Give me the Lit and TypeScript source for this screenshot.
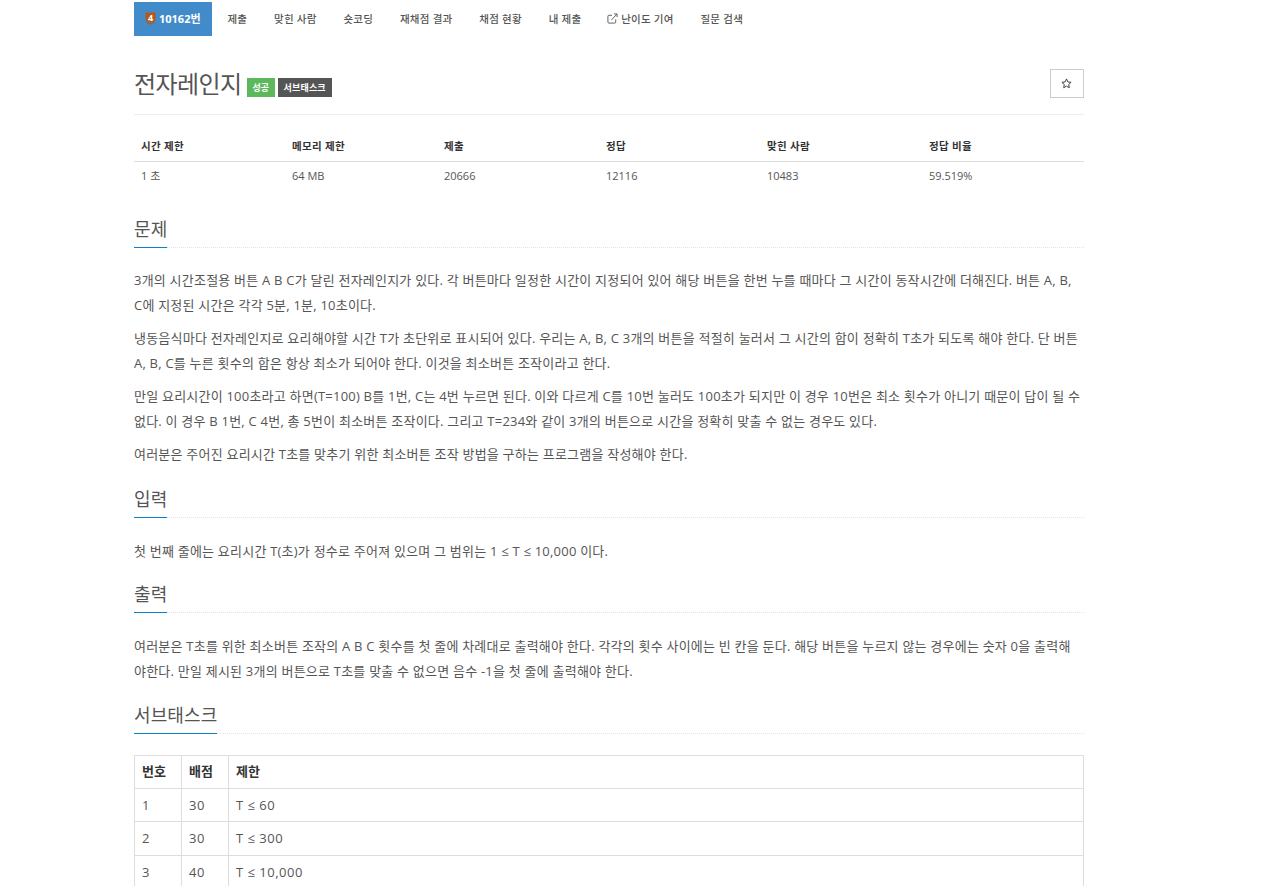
import { LitElement, html, css, svg } from "lit";
import { customElement } from "lit/decorators.js";

const externalIcon = svg`<svg class="ext" viewBox="0 0 12 12" width="11" height="11" fill="none" stroke="#555" stroke-width="1"><path d="M9.500 7v3a1 1 0 0 1-1 1H2a1 1 0 0 1-1-1V3.500a1 1 0 0 1 1-1h3.500"/><path d="M5 7.500 10.500 1.500M7.500 1h3.500v3.500"/></svg>`;

@customElement("app-root")
export class AppRoot extends LitElement {
  static styles = css`
    :host {
      display: block;
      height: 886px;
      overflow: hidden;
      background: #fff;
      color: #555;
      font-family: "Open Sans", "Noto Sans CJK KR", sans-serif;
      font-size: 13px;
    }
    .page { width: 950px; margin-left: 134px; }
    nav { display: flex; height: 34px; padding-top: 2px; font-size: 10.5px; font-weight: 500; }
    nav a { display: flex; align-items: center; gap: 3px; padding: 0 13.4px 2px; color: #555; white-space: nowrap; letter-spacing: 0.25px; }
    nav a.active { background: #428bca; color: #fff; padding: 0 12px 2px 11px; margin-right: 2px; width: 55px; font-weight: 700; font-size: 11px; gap: 3px; letter-spacing: 0; }
    .tier { display: block; flex: none; }
    .ext { flex: none; margin-left: -1px; }
    header { display: flex; align-items: flex-start; justify-content: space-between; margin-top: 32px; height: 46px; border-bottom: 1px solid #eee; }
    .title { display: flex; align-items: center; gap: 3px; height: 32px; }
    h1 { margin: 0 2px 0 0; font-size: 24px; font-weight: 400; line-height: 32px; letter-spacing: -0.55px; color: #555; }
    .label { display: flex; align-items: center; justify-content: center; height: 19px; margin-top: 7px; color: #fff; font-size: 9px; font-weight: 700; }
    .ok { width: 28px; background: #5cb85c; }
    .sub { width: 54px; background: #555; letter-spacing: 0.2px; }
    .star { display: flex; align-items: center; justify-content: center; width: 31px; height: 27px; padding-right: 1px; border: 1px solid #ccc; margin-top: 1px; }
    table { border-collapse: collapse; table-layout: fixed; width: 100%; }
    .info { margin-top: 15px; font-size: 11px; }
    .info th { height: 31px; padding: 0 7px; text-align: left; font-weight: 700; font-size: 10.5px; letter-spacing: 0.35px; color: #333; border-bottom: 1px solid #ddd; }
    .info td { height: 28px; padding: 0 7px 1px; box-sizing: border-box; color: #555; }
    .h { height: 32px; border-bottom: 1px dotted #e4e4e4; font-size: 18px; line-height: 29px; letter-spacing: 0.1px; color: #555; }
    .h span { display: block; width: fit-content; height: 32px; border-bottom: 1px solid #0b7fca; }
    .s1 { margin-top: 25px; }
    .s2 { margin-top: 18px; }
    .s3 { margin-top: 16px; }
    .s4 { margin-top: 17px; }
    .body { margin-top: 21px; }
    .s1 .body { margin-top: 20px; }
    p { margin: 0 0 8px; line-height: 25px; letter-spacing: 0.22px; }
    .sub-table { margin-top: 21px; font-size: 13px; border: 1px solid #ddd; }
    .sub-table th, .sub-table td { padding: 0 7px; border: 1px solid #ddd; text-align: left; color: #555; box-sizing: border-box; }
    .sub-table th { height: 33px; padding-bottom: 3px; color: #333; font-weight: 700; }
    .sub-table td { height: 33.5px; letter-spacing: 0.5px; }
    .c1 { width: 47px; }
    .c2 { width: 47px; }
    .w1 { width: 151px; }
    .w2 { width: 152px; }
    .w3 { width: 162px; }
    .w4 { width: 161px; }
    .w5 { width: 162px; }
  `;

  render() {
    return html`<div class="page">
      <nav>
        <a class="active"><svg class="tier" viewBox="0 0 11 13" width="11" height="13"><path d="M1 0.500h9q.5 0 .5.5v7.500L5.500 10.500.5 8.500V1q0-.5.5-.5z" fill="#b4581a"/><path d="M1 10l4.500 2L10 10" fill="none" stroke="#b4581a" stroke-width="1.200"/><text x="5.500" y="8.500" font-size="9" font-weight="700" text-anchor="middle" fill="#fff" font-family="Open Sans">4</text></svg>10162번</a>
        <a>제출</a><a>맞힌 사람</a><a>숏코딩</a><a>재채점 결과</a><a>채점 현황</a><a>내 제출</a>
        <a>${externalIcon}난이도 기여</a><a>질문 검색</a>
      </nav>
      <header>
        <div class="title"><h1>전자레인지</h1><span class="label ok">성공</span><span class="label sub">서브태스크</span></div>
        <div class="star"><svg viewBox="0 0 12 12" width="11" height="11" fill="none" stroke="#333" stroke-width="1"><path d="M6 1l1.500 3.300 3.500.4-2.600 2.400.7 3.500L6 8.900l-3.100 1.700.7-3.500L1 4.700l3.500-.4z"/></svg></div>
      </header>
      <table class="info">
        <colgroup><col class="w1"/><col class="w2"/><col class="w3"/><col class="w4"/><col class="w5"/><col/></colgroup>
        <thead><tr><th>시간 제한</th><th>메모리 제한</th><th>제출</th><th>정답</th><th>맞힌 사람</th><th>정답 비율</th></tr></thead>
        <tbody><tr><td>1 초</td><td>64 MB</td><td>20666</td><td>12116</td><td>10483</td><td>59.519%</td></tr></tbody>
      </table>
      <section class="s1">
        <div class="h"><span>문제</span></div>
        <div class="body">
          <p>3개의 시간조절용 버튼 A B C가 달린 전자레인지가 있다. 각 버튼마다 일정한 시간이 지정되어 있어 해당 버튼을 한번 누를 때마다 그 시간이 동작시간에 더해진다. 버튼 A, B,<br />C에 지정된 시간은 각각 5분, 1분, 10초이다.</p>
          <p>냉동음식마다 전자레인지로 요리해야할 시간 T가 초단위로 표시되어 있다. 우리는 A, B, C 3개의 버튼을 적절히 눌러서 그 시간의 합이 정확히 T초가 되도록 해야 한다. 단 버튼 A, B, C를 누른 횟수의 합은 항상 최소가 되어야 한다. 이것을 최소버튼 조작이라고 한다.</p>
          <p>만일 요리시간이 100초라고 하면(T=100) B를 1번, C는 4번 누르면 된다. 이와 다르게 C를 10번 눌러도 100초가 되지만 이 경우 10번은 최소 횟수가 아니기 때문이 답이 될 수 없다. 이 경우 B 1번, C 4번, 총 5번이 최소버튼 조작이다. 그리고 T=234와 같이 3개의 버튼으로 시간을 정확히 맞출 수 없는 경우도 있다.</p>
          <p>여러분은 주어진 요리시간 T초를 맞추기 위한 최소버튼 조작 방법을 구하는 프로그램을 작성해야 한다.</p>
        </div>
      </section>
      <section class="s2">
        <div class="h"><span>입력</span></div>
        <div class="body"><p>첫 번째 줄에는 요리시간 T(초)가 정수로 주어져 있으며 그 범위는 1 ≤ T ≤ 10,000 이다.</p></div>
      </section>
      <section class="s3">
        <div class="h"><span>출력</span></div>
        <div class="body"><p>여러분은 T초를 위한 최소버튼 조작의 A B C 횟수를 첫 줄에 차례대로 출력해야 한다. 각각의 횟수 사이에는 빈 칸을 둔다. 해당 버튼을 누르지 않는 경우에는 숫자 0을 출력해<br />야한다. 만일 제시된 3개의 버튼으로 T초를 맞출 수 없으면 음수 -1을 첫 줄에 출력해야 한다.</p></div>
      </section>
      <section class="s4">
        <div class="h"><span>서브태스크</span></div>
        <table class="sub-table">
          <colgroup><col class="c1"/><col class="c2"/><col/></colgroup>
          <thead><tr><th>번호</th><th>배점</th><th>제한</th></tr></thead>
          <tbody>
            <tr><td>1</td><td>30</td><td>T ≤ 60</td></tr>
            <tr><td>2</td><td>30</td><td>T ≤ 300</td></tr>
            <tr><td>3</td><td>40</td><td>T ≤ 10,000</td></tr>
          </tbody>
        </table>
      </section>
    </div>`;
  }
}
